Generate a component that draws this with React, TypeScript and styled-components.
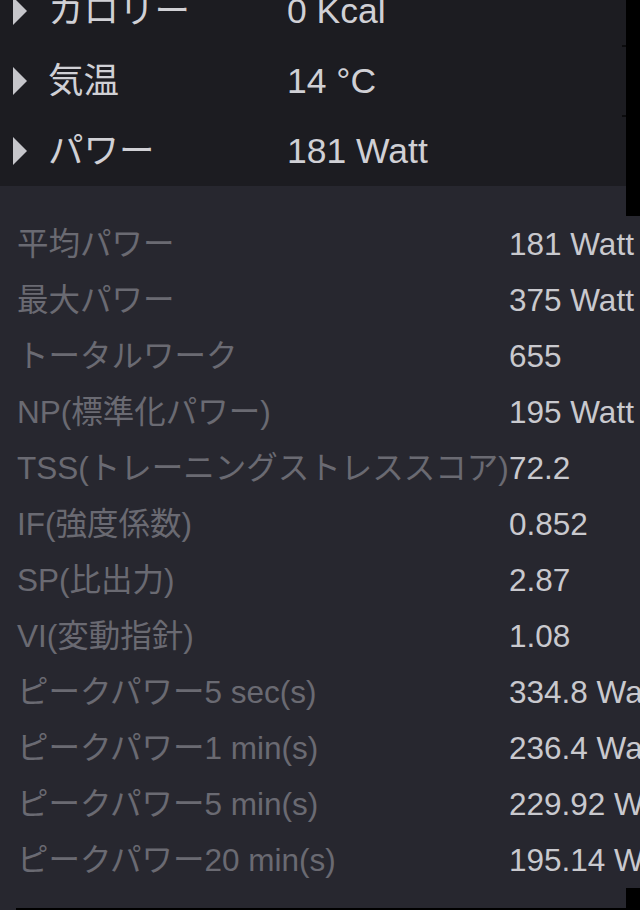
import React from "react";
import styled, { createGlobalStyle } from "styled-components";

const GlobalStyle = createGlobalStyle`
  html, body {
    margin: 0;
    padding: 0;
    background: #27272f;
    overflow: hidden;
  }
  body {
    font-family: "Liberation Sans", "Noto Sans CJK JP", sans-serif;
  }
`;

const Page = styled.div`
  position: relative;
  width: 640px;
  height: 910px;
  overflow: hidden;
  background: #27272f;
`;

const TopPanel = styled.div`
  margin-top: -24px;
  background: #1c1c21;
  display: flex;
  flex-direction: column;
`;

const TopRow = styled.div<{ $tick?: boolean }>`
  position: relative;
  height: 70px;
  display: grid;
  grid-template-columns: 14px 260px 1fr;
  align-items: center;
  padding-left: 13px;
  font-size: 35.5px;
  line-height: 40px;
  color: #d0d0d5;
  white-space: nowrap;

  &::after {
    content: "";
    display: ${(p) => (p.$tick ? "block" : "none")};
    position: absolute;
    right: 14px;
    bottom: -1px;
    width: 4px;
    height: 2px;
    background: #0b0b0d;
  }
`;

const Disclosure = styled.svg`
  width: 14px;
  height: 28px;
  display: block;
`;

const TopLabel = styled.span`
  padding-left: 21px;
`;

const TopValue = styled.span``;

const StatsPanel = styled.div`
  padding-top: 30px;
  display: flex;
  flex-direction: column;
`;

const StatRow = styled.div`
  height: 56px;
  display: grid;
  grid-template-columns: 492px 1fr;
  align-items: center;
  padding-left: 17px;
  font-size: 31.5px;
  line-height: 36px;
  white-space: nowrap;
`;

const StatLabel = styled.span`
  color: #6a6a72;
`;

const StatValue = styled.span`
  color: #c9c9ce;
`;

const EdgeStrip = styled.div<{ $top: number; $height: number }>`
  position: absolute;
  right: 0;
  top: ${(p) => p.$top}px;
  width: 14px;
  height: ${(p) => p.$height}px;
  background: #000;
`;

const BottomLine = styled.div`
  position: absolute;
  left: 16px;
  right: 0;
  bottom: 0;
  height: 2px;
  background: #000;
`;

const topRows = [
  { label: "カロリー", value: "0 Kcal" },
  { label: "気温", value: "14 °C" },
  { label: "パワー", value: "181 Watt" },
];

const stats = [
  { label: "平均パワー", value: "181 Watt" },
  { label: "最大パワー", value: "375 Watt" },
  { label: "トータルワーク", value: "655" },
  { label: "NP(標準化パワー)", value: "195 Watt" },
  { label: "TSS(トレーニングストレススコア)", value: "72.2" },
  { label: "IF(強度係数)", value: "0.852" },
  { label: "SP(比出力)", value: "2.87" },
  { label: "VI(変動指針)", value: "1.08" },
  { label: "ピークパワー5 sec(s)", value: "334.8 Watt" },
  { label: "ピークパワー1 min(s)", value: "236.4 Watt" },
  { label: "ピークパワー5 min(s)", value: "229.92 Watt" },
  { label: "ピークパワー20 min(s)", value: "195.14 Watt" },
];

export default function App() {
  return (
    <>
      <GlobalStyle />
      <Page>
        <TopPanel>
          {topRows.map((r, i) => (
            <TopRow key={r.label} $tick={i < topRows.length - 1}>
              <Disclosure viewBox="0 0 14 28">
                <polygon points="0,0 14,14 0,28" fill="#c6c6cb" />
              </Disclosure>
              <TopLabel>{r.label}</TopLabel>
              <TopValue>{r.value}</TopValue>
            </TopRow>
          ))}
        </TopPanel>
        <StatsPanel>
          {stats.map((s) => (
            <StatRow key={s.label}>
              <StatLabel>{s.label}</StatLabel>
              <StatValue>{s.value}</StatValue>
            </StatRow>
          ))}
        </StatsPanel>
        <EdgeStrip $top={0} $height={216} />
        <EdgeStrip $top={888} $height={22} />
        <BottomLine />
      </Page>
    </>
  );
}
